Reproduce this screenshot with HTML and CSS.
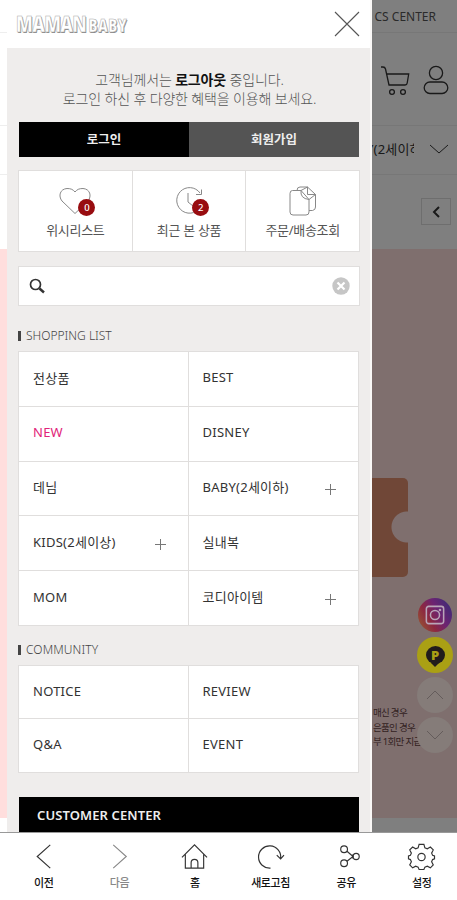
FILE: index.html
```html
<!DOCTYPE html>
<html lang="ko">
<head>
  <meta charset="UTF-8">
  <meta name="viewport" content="width=device-width, initial-scale=1.0">
  <title>MAMAN BABY</title>
  <link rel="stylesheet" href="styles.css">
</head>
<body>
  <div class="page">
    <div class="top-links"><a>CS CENTER</a></div>
    <header class="page-header">
      <svg class="cart" width="32" height="32" viewBox="0 0 32 32">
        <path d="M2 2h2q2 0 2.500 2l3.500 16h16q2 0 2.200-2l1.500-9H8"/>
        <circle cx="13" cy="27" r="2.400"/><circle cx="24" cy="27" r="2.400"/>
      </svg>
      <svg class="user" width="26" height="30" viewBox="0 0 26 30">
        <circle cx="13" cy="8" r="6.600"/>
        <rect x="1.200" y="17" width="23.600" height="11.500" rx="5.700"/>
      </svg>
    </header>
    <nav class="category-bar">
      <span class="category">Y(2세이하)</span>
      <svg width="18" height="10" viewBox="0 0 18 10"><path d="M0 1l9 8 9-8"/></svg>
    </nav>
    <div class="back-row">
      <button class="back"><svg width="8" height="12" viewBox="0 0 8 12"><path d="M7 1L2 6l5 5"/></svg></button>
    </div>
    <main class="banner">
      <div class="coupon"></div>
      <p class="banner-text"><span>매신 경우</span><span>은품인 경우</span><span>부 1회만 지급</span></p>
    </main>
  </div>

  <div class="dim"></div>

  <div class="quick">
    <a class="quick-btn insta">
      <svg width="20" height="20" viewBox="0 0 22 22"><rect x="1.500" y="1.500" width="19" height="19" rx="2.500"/><circle cx="11" cy="11" r="5"/><circle cx="16.500" cy="5.500" r=".6"/></svg>
    </a>
    <a class="quick-btn kakao"><span class="bubble">P</span></a>
    <a class="quick-btn arrow"><svg width="18" height="10" viewBox="0 0 18 10"><path d="M1 9l8-8 8 8"/></svg></a>
    <a class="quick-btn arrow"><svg width="18" height="10" viewBox="0 0 18 10"><path d="M1 1l8 8 8-8"/></svg></a>
  </div>

  <aside class="drawer">
    <div class="drawer-top">
      <h1 class="logo">MAMAN<small>BABY</small></h1>
      <svg class="close" width="24" height="24" viewBox="0 0 24 24"><path d="M0 0l24 24M24 0L0 24"/></svg>
    </div>
    <div class="drawer-body">
      <p class="greeting">고객님께서는 <b>로그아웃</b> 중입니다.<br>로그인 하신 후 다양한 혜택을 이용해 보세요.</p>
      <div class="login-row">
        <a class="login">로그인</a>
        <a class="join">회원가입</a>
      </div>

      <div class="shortcuts">
        <a class="shortcut">
          <span class="shortcut-icon">
            <svg width="32" height="30" viewBox="0 0 32 30"><path d="M16 27.500L3 15C-1 10 1 3 8 2.500c4 0 6 1 8 3.500 2-2.500 4-3.500 8-3.500 7 .5 9 7.500 5 12.500z"/></svg>
            <em class="count">0</em>
          </span>
          위시리스트
        </a>
        <a class="shortcut">
          <span class="shortcut-icon">
            <svg width="32" height="30" viewBox="0 0 32 30"><path d="M27 7A12.800 12.800 0 1 0 28.500 19M28.500 3.500V8.500H23M15 7v9l5 4"/></svg>
            <em class="count">2</em>
          </span>
          최근 본 상품
        </a>
        <a class="shortcut">
          <span class="shortcut-icon">
            <svg width="32" height="30" viewBox="0 0 32 30"><path d="M5.500 4.500h8.500l8 9V26q0 3-3 3H6q-3 0-3-3V7.500q0-3 2.500-3zM14 4.500q-1 8 8 9M10 4.500q0-3.500 3-3.500h7.500l8 7.500V21q0 3-3 3.500H22M20.500 1v7.500h8M14 4.500l6.500-3.500M22 13.500l6.500-5"/></svg>
          </span>
          주문/배송조회
        </a>
      </div>

      <div class="search">
        <svg width="16" height="16" viewBox="0 0 16 16"><circle cx="6.500" cy="6.500" r="5"/><path class="handle" d="M10.500 10.500L15 14.500"/></svg>
        <svg class="clear" width="18" height="18" viewBox="0 0 18 18"><circle cx="9" cy="9" r="8.700"/><path d="M5.500 5.500l7 7M12.500 5.500l-7 7"/></svg>
      </div>

      <h2 class="section-title shopping">SHOPPING LIST</h2>
      <div class="menu">
        <a>전상품</a>
        <a>BEST</a>
        <a class="new">NEW</a>
        <a>DISNEY</a>
        <a>데님</a>
        <a class="more">BABY(2세이하)</a>
        <a class="more">KIDS(2세이상)</a>
        <a>실내복</a>
        <a>MOM</a>
        <a class="more">코디아이템</a>
      </div>

      <h2 class="section-title community">COMMUNITY</h2>
      <div class="menu menu-community">
        <a>NOTICE</a>
        <a>REVIEW</a>
        <a>Q&amp;A</a>
        <a>EVENT</a>
      </div>

      <h2 class="customer">CUSTOMER CENTER</h2>
    </div>
  </aside>

  <footer class="tabbar">
    <a><svg width="28" height="28" viewBox="0 0 28 28"><path d="M21 2L7.500 14 21 26"/></svg>이전</a>
    <a class="off"><svg width="28" height="28" viewBox="0 0 28 28"><path d="M7.500 2L21 14 7.500 26"/></svg>다음</a>
    <a><svg width="28" height="28" viewBox="0 0 28 28"><path d="M1 15L14 2l13 13M4.500 12v14h19V12M10.500 26v-5.500a3.500 3.500 0 0 1 7 0V26"/></svg>홈</a>
    <a><svg width="28" height="28" viewBox="0 0 28 28"><path d="M14 26A11.500 11.500 0 1 1 24.500 16M20.500 12.500l4 4 3.500-4"/></svg>새로고침</a>
    <a><svg width="28" height="28" viewBox="0 0 28 28"><circle cx="11.500" cy="6.500" r="3.500"/><circle cx="11.500" cy="21" r="3.500"/><circle cx="24" cy="14" r="3.200"/><path d="M14.500 8.500l6.300 5.500-6.300 5M20.500 12v4"/></svg>공유</a>
    <a><svg width="28" height="28" viewBox="0 0 28 28"><path d="M11.500 1.500h5l1 3.500 2.500 1 3.200-1.800 3 3L24.500 10.500l1 2.300 2 .7v3l-2 .7-1 2.300 1.700 3.300-3 3L20 24l-2.500 1-1 2.500h-5l-1-2.500L8 24l-3.200 1.800-3-3 1.700-3.300-1-2.300-2-.7v-3l2-.7 1-2.300L1.800 7.200l3-3L8 6l2.500-1z"/><circle cx="14" cy="14.500" r="3.800"/></svg>설정</a>
  </footer>
</body>
</html>
```
FILE: styles.css
```css
* {
  box-sizing: border-box;
}

body {
  margin: 0;
  height: 900px;
  overflow: hidden;
  position: relative;
  background: #fff;
  color: #333;
  font-family: "Noto Sans", "Noto Sans CJK KR", sans-serif;
  font-size: 13px;
}

svg {
  fill: none;
  stroke: #333;
  overflow: visible;
}

h1, h2, p {
  margin: 0;
}

/* page behind the drawer */
.top-links {
  height: 33px;
  padding-right: 21px;
  border-bottom: 1px solid #eee;
  color: #555;
  line-height: 33px;
  text-align: right;
  font-size: 12px;
}

.page-header {
  height: 93px;
  padding: 32px 8px 0 0;
  border-bottom: 1px solid #eee;
  display: flex;
  justify-content: flex-end;
  gap: 12px;
}

.page-header svg {
  stroke-width: 1.3;
}

.category-bar {
  height: 49px;
  padding: 0 9px 3px 0;
  border-bottom: 1px solid #eee;
  display: flex;
  align-items: center;
  justify-content: flex-end;
  gap: 16px;
}

.category {
  width: 48px;
  overflow: hidden;
  white-space: nowrap;
  letter-spacing: 0.2px;
}

.back-row {
  height: 74px;
  padding: 23px 6px 0 0;
  display: flex;
  justify-content: flex-end;
  align-items: flex-start;
}

.back {
  width: 30px;
  height: 27px;
  padding: 0;
  border: 1px solid #ddd;
  background: none;
  display: flex;
  align-items: center;
  justify-content: center;
}

.back svg {
  stroke-width: 2;
}

.banner {
  height: 569px;
  padding-top: 229px;
  background: #ffdedd;
}

.coupon {
  width: 158px;
  height: 99px;
  margin-left: 250px;
  border-radius: 5px;
  background: radial-gradient(circle at 157px 49px, #ffdedd 15px, #e08f6e 16px);
}

.banner-text {
  margin: 129px 0 0 373px;
  display: flex;
  flex-direction: column;
  color: #644;
  font-size: 9.5px;
  line-height: 14.5px;
  letter-spacing: -0.7px;
  white-space: nowrap;
}

.dim {
  position: absolute;
  inset: 0 0 67px 371px;
  background: rgba(0, 0, 0, 0.5);
}

.quick {
  position: absolute;
  top: 597px;
  left: 417px;
  display: flex;
  flex-direction: column;
  gap: 4px;
}

.quick-btn {
  width: 36px;
  height: 36px;
  border-radius: 50%;
  display: flex;
  align-items: center;
  justify-content: center;
}

.insta {
  width: 34px;
  margin-left: 1px;
  height: 34px;
  margin-top: 1px;
  margin-bottom: 1px;
  background: linear-gradient(60deg, #98602f, #8d2740 35%, #6c2372 60%, #322e78);
}

.insta svg {
  stroke: #b9a5b8;
  stroke-width: 1.7;
}

.kakao {
  background: #aaa014;
}

.bubble {
  position: relative;
  width: 19px;
  height: 18px;
  border-radius: 50%;
  background: #211c1c;
  color: #aaa014;
  text-align: center;
  font-size: 13px;
  font-weight: 900;
  line-height: 18px;
}

.bubble::after {
  content: "";
  position: absolute;
  left: 5px;
  bottom: -3px;
  border: 4px solid transparent;
  border-top-color: #211c1c;
  border-bottom: 0;
}

.arrow {
  background: #857c79;
}

.arrow svg {
  stroke: #645c5b;
}

/* drawer */
.drawer {
  position: absolute;
  top: 0;
  left: 7px;
  width: 365px;
  height: 833px;
  overflow: hidden;
  background: #efedec;
  border-right: 2px solid #faf8f7;
}

.drawer-top {
  height: 48px;
  padding: 0 11px 0 9px;
  background: #fff;
  display: flex;
  align-items: center;
  justify-content: space-between;
}

.logo {
  color: #fff;
  font-family: "Open Sans", "Noto Sans", sans-serif;
  font-size: 22px;
  font-weight: 800;
  line-height: 48px;
  letter-spacing: -0.8px;
  transform: scaleX(0.79);
  transform-origin: left;
  -webkit-text-stroke: 0.6px #aaa;
  text-shadow: 1px 1px 0 #888;
}

.logo small {
  font-size: 17px;
  letter-spacing: 0.6px;
  margin-left: 3px;
}

.close {
  stroke: #555;
  stroke-width: 1.1;
}

.drawer-body {
  padding: 22px 10px 0 12px;
}

.greeting {
  color: #555;
  text-align: center;
  font-size: 14px;
  font-weight: 300;
  line-height: 19px;
  letter-spacing: -0.15px;
  white-space: nowrap;
}

.greeting b {
  color: #111;
  font-weight: 700;
}

.login-row {
  margin: 14px 1px 0 0;
  height: 35px;
  display: flex;
}

.login-row a {
  flex: 1;
  background: #000;
  color: #eee;
  text-align: center;
  font-size: 12.5px;
  font-weight: 700;
  line-height: 35px;
}

.login-row .join {
  background: #545454;
}

.shortcuts {
  margin: 13px 0 0 -1px;
  height: 82px;
  border: 1px solid #e0dedd;
  background: #fff;
  display: flex;
}

.shortcut {
  flex: 1;
  padding-top: 15px;
  display: flex;
  flex-direction: column;
  align-items: center;
  color: #555;
  font-size: 13px;
  line-height: 19px;
  letter-spacing: -0.3px;
}

.shortcut + .shortcut {
  border-left: 1px solid #e0dedd;
}

.shortcut-icon {
  position: relative;
  height: 35px;
}

.shortcut-icon svg {
  stroke: #888;
}

.count {
  position: absolute;
  left: 19px;
  top: 13px;
  width: 17px;
  height: 17px;
  border-radius: 50%;
  background: #980c10;
  color: #fff;
  text-align: center;
  font-size: 9.5px;
  font-style: normal;
  font-weight: 500;
  line-height: 17px;
}

.search {
  margin: 14px 0 0 -1px;
  height: 40px;
  padding: 0 9px 0 10px;
  border: 1px solid #e0dedd;
  background: #fff;
  display: flex;
  align-items: center;
  justify-content: space-between;
}

.search svg {
  stroke-width: 1.7;
}

.search .handle {
  stroke-width: 2.4;
}

.search .clear circle {
  fill: #c6c6c6;
  stroke: none;
}

.search .clear path {
  stroke: #fff;
  stroke-width: 2.2;
}

.section-title {
  display: flex;
  align-items: center;
  margin-left: -1px;
  color: #444;
  font-size: 12px;
  font-weight: 300;
  line-height: 16px;
  letter-spacing: 0.1px;
}

.section-title::before {
  content: "";
  width: 3px;
  height: 10px;
  margin-right: 5px;
  background: #444;
}

.shopping {
  margin-top: 22px;
  letter-spacing: 0;
}

.community {
  margin-top: 16px;
}

.menu {
  margin: 7px 1px 0 -1px;
  border: 1px solid #e0dedd;
  border-bottom: 0;
  background: #fff;
  display: grid;
  grid-template-columns: 1fr 1fr;
  grid-auto-rows: 54.8px;
}

.menu a {
  display: flex;
  align-items: center;
  justify-content: space-between;
  padding: 0 22px 3px 14px;
  border-bottom: 1px solid #e0dedd;
  letter-spacing: 0.25px;
}

.menu a:nth-child(odd) {
  border-right: 1px solid #e0dedd;
}

.menu .new {
  color: #e12379;
}

.more::after {
  content: "";
  width: 11px;
  height: 11px;
  margin-top: 5px;
  background:
    linear-gradient(#777, #777) center / 11px 1px no-repeat,
    linear-gradient(#777, #777) center / 1px 11px no-repeat;
}

.menu-community {
  grid-auto-rows: 53.5px;
}

.customer {
  margin: 24px 1px 0 0;
  height: 60px;
  padding-left: 18px;
  background: #000;
  color: #eee;
  font-size: 13px;
  font-weight: 600;
  line-height: 37px;
  letter-spacing: 0.1px;
}

/* bottom tab bar */
.tabbar {
  position: absolute;
  left: 0;
  right: 0;
  bottom: 0;
  height: 68px;
  padding: 10px 0 0 6px;
  border-top: 1px solid #999;
  background: #fff;
  display: grid;
  grid-template-columns: repeat(6, 75.6px);
}

.tabbar a {
  display: flex;
  flex-direction: column;
  align-items: center;
  color: #111;
  font-size: 11px;
  font-weight: 500;
  line-height: 25px;
  letter-spacing: -0.4px;
}

.tabbar svg {
  width: 27px;
  height: 27px;
  stroke-width: 1.2;
}

.tabbar .off {
  color: #888;
}

.tabbar .off svg {
  stroke: #888;
}
```
